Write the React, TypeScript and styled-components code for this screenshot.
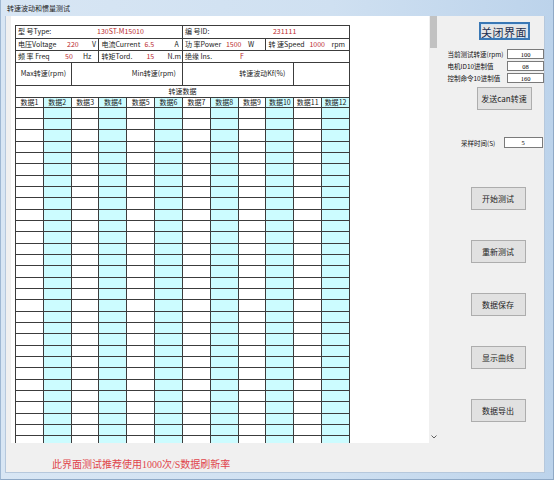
import React from "react";
import styled, { createGlobalStyle } from "styled-components";

const Global = createGlobalStyle`
  html, body { margin: 0; padding: 0; background: #cddff1; }
  body { font-family: "Noto Sans CJK SC", "Noto Sans", sans-serif; }
  * { box-sizing: border-box; }
`;

const Window = styled.div`
  width: 554px;
  height: 480px;
  display: flex;
  flex-direction: column;
  padding: 0 8px 6px 4px;
  background: linear-gradient(90deg, #d8e6f4 0%, #cfe0f1 60%, #bcd3eb 100%);
  border-left: 1px solid #9fb8d3;
  border-right: 1px solid #8fa9c6;
  border-bottom: 1px solid #8fa9c6;
`;

const TitleBar = styled.div`
  height: 16px;
  display: flex;
  align-items: center;
  padding-left: 2px;
  font-size: 7px;
  color: #1e1e1e;
`;

const Client = styled.div`
  flex: 1;
  display: flex;
  background: #f0f0f0;
  border: 1px solid #b6c8dc;
  border-top: none;
`;

const LeftCol = styled.div`
  width: 436px;
  display: flex;
  flex-direction: column;
`;

const ScrollArea = styled.div`
  height: 427px;
  display: flex;
  padding-left: 5px;
`;

const Viewport = styled.div`
  flex: 1;
  background: #ffffff;
  overflow: hidden;
  padding: 9px 0 0 4px;
`;

const Scrollbar = styled.div`
  width: 10px;
  position: relative;
  background: #f0f0f0;
`;

const Thumb = styled.div`
  position: absolute;
  left: 1px;
  top: 0;
  width: 7px;
  height: 32px;
  background: #c2c2c2;
`;

const ArrowDown = styled.div`
  position: absolute;
  left: 1px;
  bottom: 2px;
  width: 8px;
  height: 8px;
  display: flex;
  align-items: center;
  justify-content: center;
`;

const Footer = styled.div`
  flex: 1;
  padding: 16px 0 0 46px;
  font-family: "Liberation Serif", "Noto Sans CJK SC", serif;
  font-size: 10px;
  line-height: 12px;
  color: #e0464c;
`;

const Table = styled.div`
  width: 335px;
  display: grid;
  grid-template-columns: repeat(12, 27.83px);
  grid-template-rows: 12.7px 12.3px 11.7px 23.3px 11.7px 10px repeat(30, 11.33px);
  border-left: 1px solid #3c3c3c;
  border-top: 1px solid #3c3c3c;
  font-size: 7px;
  color: #1a1a1a;
`;

const Cell = styled.div<{ $span?: number; $cyan?: boolean; $align?: "start" | "center" | "end"; $pr?: number }>`
  grid-column: span ${(p) => p.$span ?? 1};
  border-right: 1px solid #3c3c3c;
  border-bottom: 1px solid #3c3c3c;
  background: ${(p) => (p.$cyan ? "#ccfcff" : "#ffffff")};
  display: flex;
  align-items: center;
  justify-content: ${(p) =>
    p.$align === "center" ? "center" : p.$align === "end" ? "flex-end" : "flex-start"};
  padding-right: ${(p) => p.$pr ?? 0}px;
  white-space: nowrap;
  overflow: hidden;
  line-height: 1;
`;

const InfoCell = styled.div<{ $span: number; $cols: string }>`
  grid-column: span ${(p) => p.$span};
  border-right: 1px solid #3c3c3c;
  border-bottom: 1px solid #3c3c3c;
  display: grid;
  grid-template-columns: ${(p) => p.$cols};
  align-items: center;
  padding-left: 2px;
  white-space: nowrap;
  overflow: hidden;
  line-height: 1;
`;

const Value = styled.span`
  color: #bb2a2e;
`;

const RightPanel = styled.div`
  flex: 1;
  display: flex;
  flex-direction: column;
  padding-top: 6px;
`;

const CloseButton = styled.button`
  margin-left: 40px;
  width: 51px;
  height: 18px;
  padding: 0;
  background: #e5e5e5;
  border: 2px solid #3a78b5;
  box-shadow: inset 0 0 0 1px #cfe3f6;
  font-family: "Liberation Serif", "Noto Sans CJK SC", serif;
  font-size: 11px;
  color: #1b2f52;
  letter-spacing: 0.5px;
`;

const ParamGroup = styled.div<{ $top: number }>`
  margin-top: ${(p) => p.$top}px;
  display: flex;
  flex-direction: column;
  gap: 2px;
`;

const ParamRow = styled.div<{ $indent: number; $labelW: number; $h: number }>`
  display: flex;
  align-items: center;
  height: ${(p) => p.$h}px;
  padding-left: ${(p) => p.$indent}px;
  & > span {
    width: ${(p) => p.$labelW}px;
    font-size: 6.5px;
    white-space: nowrap;
    color: #111;
  }
`;

const Input = styled.div<{ $w: number }>`
  width: ${(p) => p.$w}px;
  height: 100%;
  background: #fff;
  border: 1px solid #7a7a7a;
  font-size: 6.5px;
  display: flex;
  align-items: center;
  justify-content: center;
  font-family: "Liberation Serif", serif;
`;

const PanelButton = styled.button<{ $left: number; $top: number }>`
  margin-left: ${(p) => p.$left}px;
  margin-top: ${(p) => p.$top}px;
  width: 55px;
  height: 23px;
  padding: 0;
  background: #e1e1e1;
  border: 1px solid #adadad;
  font-family: "Noto Sans CJK SC", sans-serif;
  font-size: 8px;
  color: #1e1e1e;
`;

const Actions = styled.div`
  margin-top: 39px;
  display: flex;
  flex-direction: column;
  gap: 30px;
`;

const DATA_ROWS = 30;

export default function App() {
  const cols = Array.from({ length: 12 }, (_, i) => i);
  return (
    <>
      <Global />
      <Window>
        <TitleBar>转速波动和惯量测试</TitleBar>
        <Client>
          <LeftCol>
            <ScrollArea>
              <Viewport>
                <Table>
                  <InfoCell $span={6} $cols="79px 1fr">
                    <span>型 号Type:</span>
                    <Value>130ST-M15010</Value>
                  </InfoCell>
                  <InfoCell $span={6} $cols="88px 1fr">
                    <span>编 号ID:</span>
                    <Value>231111</Value>
                  </InfoCell>

                  <InfoCell $span={3} $cols="49px 25px 1fr">
                    <span>电压Voltage</span>
                    <Value>220</Value>
                    <span>V</span>
                  </InfoCell>
                  <InfoCell $span={3} $cols="43px 30px 1fr">
                    <span>电流Current</span>
                    <Value>6.5</Value>
                    <span>A</span>
                  </InfoCell>
                  <InfoCell $span={3} $cols="41px 22px 1fr">
                    <span>功 率Power</span>
                    <Value>1500</Value>
                    <span>W</span>
                  </InfoCell>
                  <InfoCell $span={3} $cols="41px 22px 1fr">
                    <span>转 速Speed</span>
                    <Value>1000</Value>
                    <span>rpm</span>
                  </InfoCell>

                  <InfoCell $span={3} $cols="47px 18px 1fr">
                    <span>频 率 Freq</span>
                    <Value>50</Value>
                    <span>Hz</span>
                  </InfoCell>
                  <InfoCell $span={3} $cols="45px 21px 1fr">
                    <span>转矩Tord.</span>
                    <Value>15</Value>
                    <span>N.m</span>
                  </InfoCell>
                  <InfoCell $span={6} $cols="55px 1fr">
                    <span>绝缘 Ins.</span>
                    <Value>F</Value>
                  </InfoCell>

                  <Cell $span={2} $align="center">Max转速(rpm)</Cell>
                  <Cell $span={4} $align="end" $pr={6}>Min转速(rpm)</Cell>
                  <Cell $span={4} $align="end" $pr={8}>转速波动Kf(%)</Cell>
                  <Cell $span={2} />

                  <Cell $span={12} $align="center">转速数据</Cell>

                  {cols.map((i) => (
                    <Cell key={`h${i}`} $align="center" $cyan={i % 2 === 1}>
                      数据{i + 1}
                    </Cell>
                  ))}

                  {Array.from({ length: DATA_ROWS }).flatMap((_, r) =>
                    cols.map((i) => <Cell key={`d${r}-${i}`} $cyan={i % 2 === 1} />)
                  )}
                </Table>
              </Viewport>
              <Scrollbar>
                <Thumb />
                <ArrowDown>
                  <svg width="6" height="4" viewBox="0 0 6 4">
                    <path d="M0.5 0.5 L3 3 L5.5 0.5" fill="none" stroke="#606060" strokeWidth="1" />
                  </svg>
                </ArrowDown>
              </Scrollbar>
            </ScrollArea>
            <Footer>此界面测试推荐使用1000次/S数据刷新率</Footer>
          </LeftCol>

          <RightPanel>
            <CloseButton>关闭界面</CloseButton>
            <ParamGroup $top={9}>
              <ParamRow $indent={9} $labelW={59.5} $h={10}>
                <span>当前测试转速(rpm)</span>
                <Input $w={37}>100</Input>
              </ParamRow>
              <ParamRow $indent={9} $labelW={59.5} $h={10}>
                <span>电机ID10进制值</span>
                <Input $w={37}>08</Input>
              </ParamRow>
              <ParamRow $indent={9} $labelW={59.5} $h={10}>
                <span>控制命令10进制值</span>
                <Input $w={37}>160</Input>
              </ParamRow>
            </ParamGroup>
            <PanelButton $left={38} $top={4}>发送can转速</PanelButton>
            <ParamGroup $top={27}>
              <ParamRow $indent={22.5} $labelW={42.5} $h={11}>
                <span>采样时间(S)</span>
                <Input $w={39}>5</Input>
              </ParamRow>
            </ParamGroup>
            <Actions>
              <PanelButton $left={32} $top={0}>开始测试</PanelButton>
              <PanelButton $left={32} $top={0}>重新测试</PanelButton>
              <PanelButton $left={32} $top={0}>数据保存</PanelButton>
              <PanelButton $left={32} $top={0}>显示曲线</PanelButton>
              <PanelButton $left={32} $top={0}>数据导出</PanelButton>
            </Actions>
          </RightPanel>
        </Client>
      </Window>
    </>
  );
}
